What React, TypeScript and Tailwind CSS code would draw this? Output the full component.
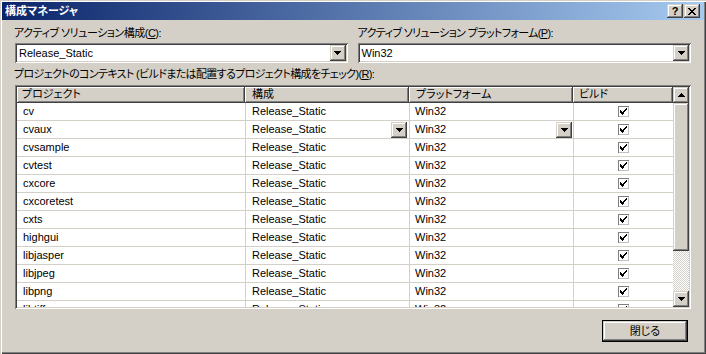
import React from "react";

const rows = [
  "cv",
  "cvaux",
  "cvsample",
  "cvtest",
  "cxcore",
  "cxcoretest",
  "cxts",
  "highgui",
  "libjasper",
  "libjpeg",
  "libpng",
  "libtiff",
];

const raised =
  "bg-[#d4d0c8] shadow-[inset_-1px_-1px_#404040,inset_1px_1px_#ffffff,inset_-2px_-2px_#808080]";
const raisedOuter =
  "bg-[#d4d0c8] shadow-[inset_-1px_-1px_#404040,inset_1px_1px_#d4d0c8,inset_-2px_-2px_#808080,inset_2px_2px_#ffffff]";
const sunken =
  "shadow-[inset_1px_1px_#808080,inset_-1px_-1px_#ffffff,inset_2px_2px_#404040,inset_-2px_-2px_#d4d0c8]";

function DownArrow() {
  return (
    <svg width="7" height="4" viewBox="0 0 7 4" className="block">
      <path d="M0 0h7v1H0zM1 1h5v1H1zM2 2h3v1H2zM3 3h1v1H3z" fill="#000" />
    </svg>
  );
}
function UpArrow() {
  return (
    <svg width="7" height="4" viewBox="0 0 7 4" className="block">
      <path d="M3 0h1v1H3zM2 1h3v1H2zM1 2h5v1H1zM0 3h7v1H0z" fill="#000" />
    </svg>
  );
}

function DropBtn({ className = "" }: { className?: string }) {
  return (
    <div className={`${raisedOuter} w-[16px] h-[16px] flex items-center justify-center ${className}`}>
      <DownArrow />
    </div>
  );
}

function Combo({ value }: { value: string }) {
  return (
    <div className={`h-[20px] bg-white ${sunken} flex items-center pl-[4px] pr-[2px]`}>
      <span className="flex-1 leading-[13px]">{value}</span>
      <DropBtn />
    </div>
  );
}

function Check() {
  return (
    <div className="w-[11px] h-[11px] bg-white shadow-[inset_1px_1px_#808080,inset_-1px_-1px_#c0c0c0] flex items-center justify-center">
      <svg width="7" height="7" viewBox="0 0 7 7" className="block">
        <path
          d="M6 0h1v1H6zM5 1h2v1H5zM0 2h1v1H0zM4 2h2v1H4zM0 3h2v1H0zM3 3h2v1H3zM0 4h4v1H0zM1 5h3v1H1zM2 6h1v1H2z"
          fill="#000"
        />
      </svg>
    </div>
  );
}

export default function App() {
  return (
    <div
      className={`w-[706px] h-[354px] overflow-hidden bg-[#d4d0c8] p-[2px] text-[11px] text-black font-['Liberation_Sans','Noto_Sans_CJK_JP',sans-serif] [font-feature-settings:'palt'] shadow-[inset_1px_1px_#d4d0c8,inset_2px_2px_#ffffff,inset_-1px_-1px_#404040,inset_-2px_-2px_#808080]`}
    >
      {/* Title bar */}
      <div className="h-[18px] flex items-center bg-[linear-gradient(90deg,#0a246a,#a6caf0)] pl-[3px] pr-[4px]">
        <span className="flex-1 font-bold text-white leading-[14px] text-[11px]">構成マネージャ</span>
        <div className="flex gap-[1px]">
          <div className={`${raisedOuter} w-[16px] h-[14px] flex items-center justify-center`}>
            <span className="font-bold text-[11px] leading-[11px] font-['Liberation_Sans',sans-serif]">?</span>
          </div>
          <div className={`${raisedOuter} w-[16px] h-[14px] flex items-center justify-center`}>
            <svg width="8" height="7" viewBox="0 0 8 7" className="block">
              <path
                d="M0 0h2v1H0zM6 0h2v1H6zM1 1h2v1H1zM5 1h2v1H5zM2 2h4v1H2zM3 3h2v1H3zM2 4h4v1H2zM1 5h2v1H1zM5 5h2v1H5zM0 6h2v1H0zM6 6h2v1H6z"
                fill="#000"
              />
            </svg>
          </div>
        </div>
      </div>

      {/* Content */}
      <div className="pl-[12px] pr-[13px] pt-[7px]">
        <div className="grid grid-cols-2 gap-x-[10px]">
          <div className="flex flex-col">
            <div className="h-[13px] leading-[13px] mb-[3px] whitespace-nowrap tracking-[-0.5px]">
              アクティブ ソリューション構成(<span className="underline">C</span>):
            </div>
            <div className="pl-[1px]">
              <Combo value="Release_Static" />
            </div>
          </div>
          <div className="flex flex-col">
            <div className="h-[13px] leading-[13px] mb-[3px] whitespace-nowrap tracking-[-0.65px]">
              アクティブ ソリューション プラットフォーム(<span className="underline">P</span>):
            </div>
            <Combo value="Win32" />
          </div>
        </div>

        <div className="h-[13px] leading-[13px] mt-[5px] whitespace-nowrap tracking-[-0.65px]">
          プロジェクトのコンテキスト (ビルドまたは配置するプロジェクト構成をチェック)(<span className="underline">R</span>):
        </div>

        {/* Grid */}
        <div className={`mt-[4px] ml-[1px] w-[676px] h-[224px] p-[2px] bg-white ${sunken} flex`}>
          <div className="w-[656px] h-[220px] overflow-hidden flex flex-col">
            <div className="flex h-[16px] shrink-0">
              <div className={`${raised} w-[228px] pl-[5px] leading-[15px]`}>プロジェクト</div>
              <div className={`${raised} w-[164px] pl-[7px] leading-[15px]`}>構成</div>
              <div className={`${raised} w-[164px] pl-[7px] leading-[15px]`}>プラットフォーム</div>
              <div className={`${raised} w-[100px] pl-[6px] leading-[15px]`}>ビルド</div>
            </div>
            {rows.map((name, i) => (
              <div key={name} className="flex h-[18px] shrink-0 border-b border-[#d4d0c8]">
                <div className="w-[228px] pl-[6px] flex items-center">{name}</div>
                <div className="w-[164px] border-l border-[#d4d0c8] pl-[6px] pr-[2px] flex items-center">
                  <span className="flex-1">Release_Static</span>
                  {i === 1 && <DropBtn className="w-[15px]" />}
                </div>
                <div className="w-[164px] border-l border-[#d4d0c8] pl-[5px] pr-[1px] flex items-center">
                  <span className="flex-1">Win32</span>
                  {i === 1 && <DropBtn className="w-[15px]" />}
                </div>
                <div className="w-[100px] border-l border-[#d4d0c8] flex items-center justify-center">
                  <Check />
                </div>
              </div>
            ))}
          </div>
          {/* Scrollbar */}
          <div className="w-[16px] h-[220px] flex flex-col">
            <div className={`${raisedOuter} h-[16px] flex items-center justify-center shrink-0`}>
              <UpArrow />
            </div>
            <div className={`${raisedOuter} h-[148px] shrink-0`} />
            <div className="h-[40px] shrink-0 bg-[conic-gradient(#ffffff_25%,#d4d0c8_0_50%,#ffffff_0_75%,#d4d0c8_0)] [background-size:2px_2px]" />
            <div className={`${raisedOuter} h-[16px] flex items-center justify-center shrink-0`}>
              <DownArrow />
            </div>
          </div>
        </div>

        {/* Bottom button */}
        <div className="flex justify-end mt-[11px] pr-[3px]">
          <div className="w-[86px] h-[22px] border border-black">
            <div className={`${raisedOuter} w-full h-full flex items-center justify-center`}>
              <span className="leading-[13px]">閉じる</span>
            </div>
          </div>
        </div>
      </div>
    </div>
  );
}
